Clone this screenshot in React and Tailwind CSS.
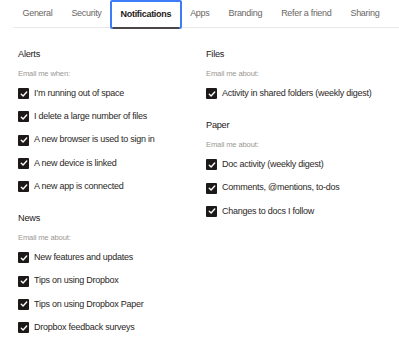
import React from "react";

const tabs = ["General", "Security", "Notifications", "Apps", "Branding", "Refer a friend", "Sharing"];

const sections = {
  left: [
    {
      title: "Alerts",
      sub: "Email me when:",
      items: [
        "I’m running out of space",
        "I delete a large number of files",
        "A new browser is used to sign in",
        "A new device is linked",
        "A new app is connected",
      ],
    },
    {
      title: "News",
      sub: "Email me about:",
      items: [
        "New features and updates",
        "Tips on using Dropbox",
        "Tips on using Dropbox Paper",
        "Dropbox feedback surveys",
      ],
    },
  ],
  right: [
    {
      title: "Files",
      sub: "Email me about:",
      items: ["Activity in shared folders (weekly digest)"],
    },
    {
      title: "Paper",
      sub: "Email me about:",
      items: ["Doc activity (weekly digest)", "Comments, @mentions, to-dos", "Changes to docs I follow"],
    },
  ],
};

const CheckBox = () => (
  <span className="w-[11px] h-[11px] bg-[#1e1919] rounded-[1px] flex items-center justify-center shrink-0">
    <svg width="8" height="8" viewBox="0 0 8 8" fill="none">
      <path d="M1.3 4.2 L3.1 5.9 L6.7 2.1" stroke="white" strokeWidth="1.4" strokeLinecap="round" strokeLinejoin="round" />
    </svg>
  </span>
);

const Section = ({ title, sub, items }) => (
  <div className="mb-[14px]">
    <div className="h-[12px] leading-[12px] text-[9.2px] tracking-[-0.25px] text-[#1e1919]">{title}</div>
    <div className="mt-[9px] h-[10px] leading-[10px] text-[7.6px] tracking-[-0.15px] text-[#9a9793]">{sub}</div>
    <div className="mt-[3px] flex flex-col">
      {items.map((item, i) => (
        <label key={i} className="h-[23.25px] flex items-center gap-[5px] text-[9px] tracking-[-0.25px] text-[#2b2726]">
          <CheckBox />
          <span>{item}</span>
        </label>
      ))}
    </div>
  </div>
);

export default function App() {
  return (
    <div className="w-[399px] h-[339px] bg-white overflow-hidden" style={{ fontFamily: '"Liberation Sans", Arial, sans-serif' }}>
      <div className="ml-[13px] h-[28px] flex border-b border-[#e8e8e8]">
        {tabs.map((t) => {
          const active = t === "Notifications";
          return (
            <div
              key={t}
              className={`relative h-full flex items-center px-[9.5px] text-[9px] tracking-[-0.3px] ${
                active ? "font-bold text-[#1e1919] outline-2 outline-[#3d7cf6] -outline-offset-1 rounded-[1px] mt-[1px] h-[27px]" : "text-[#6a6764]"
              }`}
            >
              {t}
              {active && <span className="absolute left-[2px] right-[2px] bottom-[-1px] h-[2px] bg-[#4a4746]" />}
            </div>
          );
        })}
      </div>
      <div className="pl-[18px] pt-[20px] flex">
        <div className="w-[188px]">
          {sections.left.map((s) => (
            <Section key={s.title} {...s} />
          ))}
        </div>
        <div className="flex-1">
          {sections.right.map((s) => (
            <Section key={s.title} {...s} />
          ))}
        </div>
      </div>
    </div>
  );
}
